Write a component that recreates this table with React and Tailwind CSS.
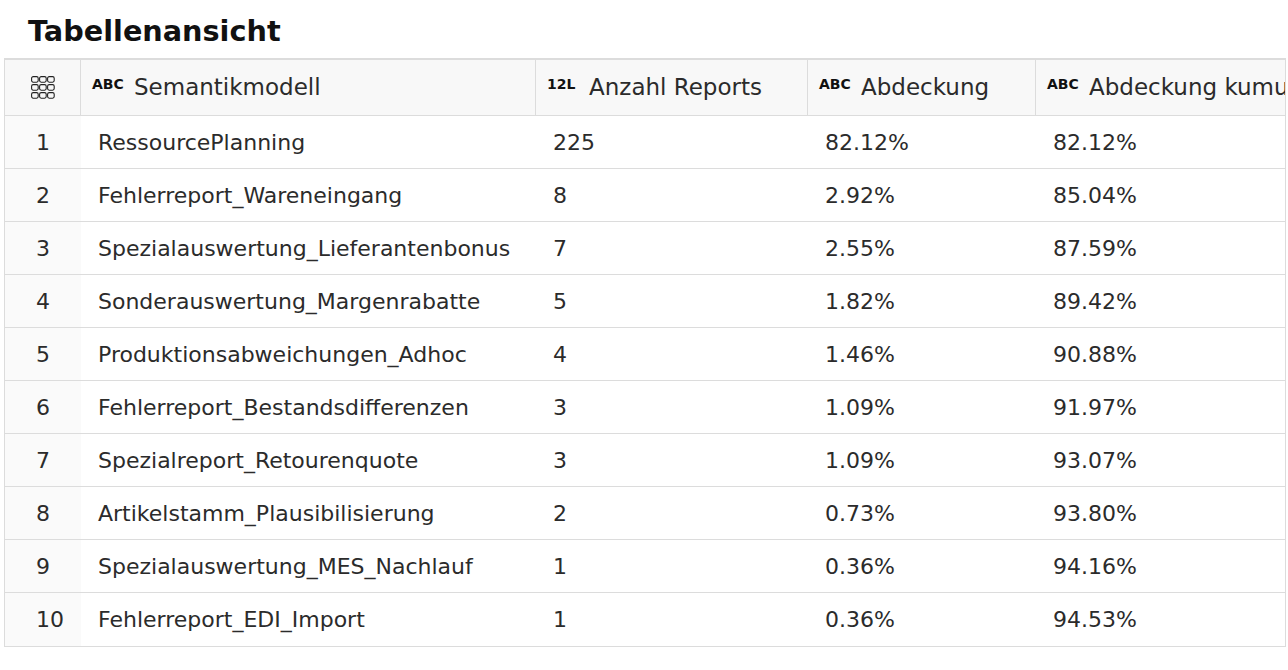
const columns = [
  { key: "model", label: "Semantikmodell", type: "ABC", width: "w-[455px]" },
  { key: "count", label: "Anzahl Reports", type: "12L", width: "w-[272px]" },
  { key: "share", label: "Abdeckung", type: "ABC", width: "w-[228px]" },
  { key: "cum", label: "Abdeckung kumuliert", type: "ABC", width: "w-[300px]" },
];

const rows = [
  ["RessourcePlanning", "225", "82.12%", "82.12%"],
  ["Fehlerreport_Wareneingang", "8", "2.92%", "85.04%"],
  ["Spezialauswertung_Lieferantenbonus", "7", "2.55%", "87.59%"],
  ["Sonderauswertung_Margenrabatte", "5", "1.82%", "89.42%"],
  ["Produktionsabweichungen_Adhoc", "4", "1.46%", "90.88%"],
  ["Fehlerreport_Bestandsdifferenzen", "3", "1.09%", "91.97%"],
  ["Spezialreport_Retourenquote", "3", "1.09%", "93.07%"],
  ["Artikelstamm_Plausibilisierung", "2", "0.73%", "93.80%"],
  ["Spezialauswertung_MES_Nachlauf", "1", "0.36%", "94.16%"],
  ["Fehlerreport_EDI_Import", "1", "0.36%", "94.53%"],
];

const GridIcon = () => (
  <svg width="24" height="23" viewBox="0 0 24 23" fill="none" stroke="#222" strokeWidth="1.1">
    {[0.6, 8.6, 16.6].map((y) =>
      [0.6, 8.6, 16.6].map((x) => (
        <rect key={`${x}-${y}`} x={x} y={y} width="6.6" height="5.6" rx="1.6" />
      ))
    )}
  </svg>
);

export default function App() {
  return (
    <div className="w-[1288px] h-[670px] bg-white overflow-hidden font-['DejaVu_Sans',sans-serif] text-[#2b2b2b]">
      <h1 className="h-[58px] pt-[15px] pl-[28px] text-[28.7px] leading-[32px] font-bold text-[#111]">
        Tabellenansicht
      </h1>

      <div className="ml-[4px] w-[1282px] overflow-hidden border-t-2 border-l border-r border-b border-[#dcdcdc]">
        {/* header */}
        <div className="flex h-[56px] bg-[#f8f8f8] border-b border-[#dcdcdc] whitespace-nowrap">
          <div className="w-[76px] shrink-0 flex items-center justify-center border-r border-[#dcdcdc]">
            <GridIcon />
          </div>
          {columns.map((col, i) => (
            <div
              key={col.key}
              className={`${col.width} shrink-0 flex items-center pl-[11px] ${i < columns.length - 1 ? "border-r border-[#dcdcdc]" : ""}`}
            >
              <span className="w-[42px] shrink-0 text-[14px] font-bold text-[#111] -translate-y-[3px]">{col.type}</span>
              <span className="text-[23px]">{col.label}</span>
            </div>
          ))}
        </div>

        {/* body */}
        {rows.map((row, idx) => (
          <div
            key={idx}
            className={`flex h-[53px] text-[22px] whitespace-nowrap ${idx < rows.length - 1 ? "border-b border-[#dcdcdc]" : ""}`}
          >
            <div className="w-[76px] shrink-0 flex items-center pl-[31px] bg-[#fafafa]">
              {idx + 1}
            </div>
            {row.map((cell, c) => (
              <div key={c} className={`${columns[c].width} shrink-0 flex items-center pl-[17px]`}>
                {cell}
              </div>
            ))}
          </div>
        ))}
      </div>
    </div>
  );
}
